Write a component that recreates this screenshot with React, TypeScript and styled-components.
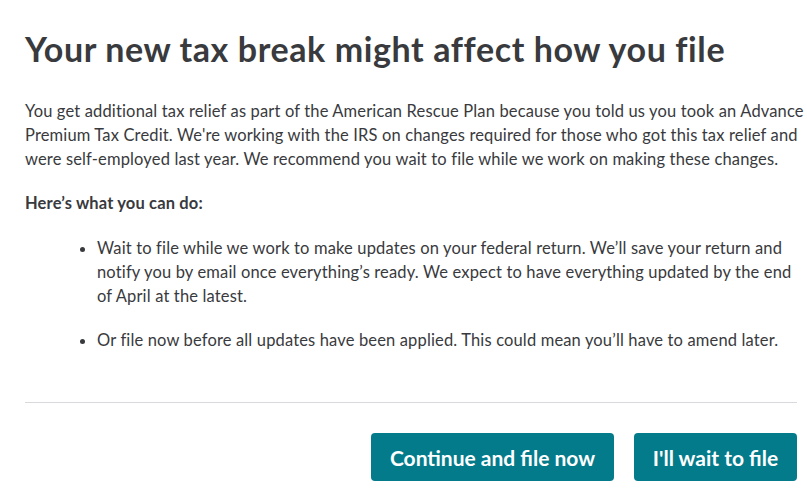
import React from "react";
import styled, { createGlobalStyle } from "styled-components";

const Global = createGlobalStyle`
  html, body { margin: 0; padding: 0; background: #fff; }
  body { font-family: Lato, "Noto Sans", sans-serif; color: #393a3d; }
`;

const Page = styled.div`
  padding: 27px 10px 0 25px;
  width: 772px;
`;

const Title = styled.h1`
  margin: 0;
  font-size: 34px;
  letter-spacing: 0.6px;
  line-height: 44px;
  font-weight: 700;
  color: #393a3d;
  white-space: nowrap;
`;

const Para = styled.p<{ $bold?: boolean }>`
  margin: ${(p) => (p.$bold ? "20px 0 0" : "28px 0 0")};
  font-size: 16.5px;
  letter-spacing: 0.15px;
  line-height: 24px;
  font-weight: ${(p) => (p.$bold ? 700 : 400)};
`;

const Line = styled.span`
  display: block;
  white-space: nowrap;
`;

const List = styled.ul`
  margin: 21px 0 0;
  padding: 0 0 0 72px;
  list-style: disc;
  font-size: 16.5px;
  letter-spacing: 0.15px;
  line-height: 24px;
`;

const Item = styled.li`
  & + & { margin-top: 20px; }
`;

const Divider = styled.hr`
  border: 0;
  border-top: 1px solid #d8d9dc;
  margin: 50px 0 0;
`;

const Actions = styled.div`
  display: flex;
  justify-content: flex-end;
  gap: 20px;
  margin-top: 30px;
`;

const Button = styled.button<{ $w: number }>`
  width: ${(p) => p.$w}px;
  height: 48px;
  border: 0;
  border-radius: 4px;
  background: #037b8b;
  color: #fff;
  font-family: Lato, "Noto Sans", sans-serif;
  font-weight: 700;
  font-size: 21px;
  padding: 0;
  cursor: pointer;
`;

export default function App() {
  return (
    <>
      <Global />
      <Page>
        <Title>Your new tax break might affect how you file</Title>
        <Para>
          <Line>You get additional tax relief as part of the American Rescue Plan because you told us you took an Advance</Line>
          <Line>Premium Tax Credit. We're working with the IRS on changes required for those who got this tax relief and</Line>
          <Line>were self-employed last year. We recommend you wait to file while we work on making these changes.</Line>
        </Para>
        <Para $bold>Here’s what you can do:</Para>
        <List>
          <Item>
            <Line>Wait to file while we work to make updates on your federal return. We’ll save your return and</Line>
            <Line>notify you by email once everything’s ready. We expect to have everything updated by the end</Line>
            <Line>of April at the latest.</Line>
          </Item>
          <Item>
            <Line>Or file now before all updates have been applied. This could mean you’ll have to amend later.</Line>
          </Item>
        </List>
        <Divider />
        <Actions>
          <Button $w={243}>Continue and file now</Button>
          <Button $w={163}>I'll wait to file</Button>
        </Actions>
      </Page>
    </>
  );
}
